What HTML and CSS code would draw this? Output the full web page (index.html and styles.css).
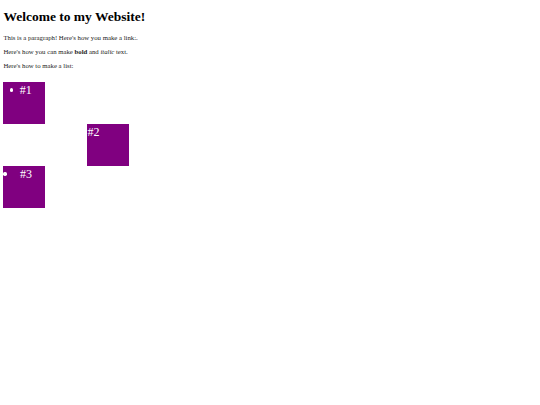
FILE: index.html
```html
<!DOCTYPE html>
<html>
<head>
<meta charset="utf-8">
<link rel="stylesheet" href="styles.css">
</head>
<body>
<div class="page">
  <h1 class="title">Welcome to my Website!</h1>
  <p class="text">This is a paragraph! Here's how you make a link:.</p>
  <p class="text">Here's how you can make <b>bold</b> and <i>italic</i> text.</p>
  <p class="text">Here's how to make a list:</p>
  <ul class="list">
    <li class="item item-first"><span class="dot dot-first"></span>#1</li>
    <li class="item item-second">#2</li>
    <li class="item item-third"><span class="dot dot-third"></span>#3</li>
  </ul>
</div>
</body>
</html>
```
FILE: styles.css
```css
html, body {
  margin: 0;
  padding: 0;
  background: #fff;
}
.page {
  padding: 0 3.4px;
  font-family: "Liberation Serif", "Times New Roman", serif;
  color: #000;
}
.title {
  font-size: 13.5px;
  font-weight: bold;
  margin: 9px 0;
}
.text {
  font-size: 6.75px;
  margin: 6.75px 0;
  color: #222;
}
.list {
  list-style: none;
  margin: 13.3px 0 0;
  padding: 0;
}
.item {
  display: flex;
  align-items: flex-start;
  box-sizing: border-box;
  width: 42px;
  height: 42px;
  background: #800080;
  color: #fff;
  font-size: 12px;
  line-height: 14px;
  padding-top: 1px;
}
.item-first {
  padding-left: 6.2px;
}
.item-second {
  margin-left: 84px;
}
.item-third {
  padding-left: 0;
}
.dot {
  width: 3.4px;
  height: 3.4px;
  border-radius: 50%;
  background: #fff;
  margin-top: 5.4px;
}
.dot-first {
  margin-right: 6.8px;
}
.dot-third {
  margin-right: 13.2px;
}
```
